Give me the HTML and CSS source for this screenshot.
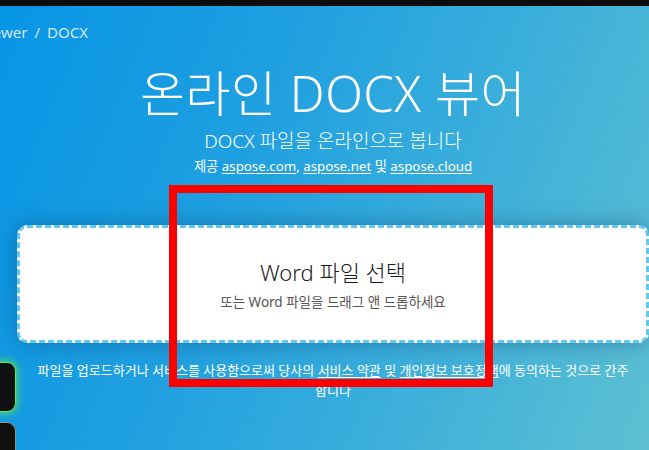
FILE: index.html
```html
<!DOCTYPE html>
<html lang="ko">
<head>
<meta charset="utf-8">
<title>온라인 DOCX 뷰어</title>
<link rel="stylesheet" href="styles.css">
</head>
<body>
<div class="topbar"></div>
<div class="hero">
  <nav class="breadcrumb">Viewer<span class="sep">/</span>DOCX</nav>
  <main class="main">
    <h1 class="title">온라인 DOCX 뷰어</h1>
    <p class="subtitle">DOCX 파일을 온라인으로 봅니다</p>
    <p class="provider">제공 <a href="#">aspose.com</a>, <a href="#">aspose.net</a> 및 <a href="#">aspose.cloud</a></p>
    <div class="dropzone">
      <div class="drop-title">Word 파일 선택</div>
      <div class="drop-sub">또는 Word 파일을 드래그 앤 드롭하세요</div>
    </div>
    <p class="terms">파일을 업로드하거나 서비스를 사용함으로써 당사의 <a href="#">서비스 약관</a> 및 <a href="#">개인정보 보호정책</a>에 동의하는 것으로 간주합니다</p>
  </main>
  <div class="side side-a"></div>
  <div class="side side-b"></div>
  <div class="highlight"></div>
</div>
</body>
</html>
```
FILE: styles.css
```css
html, body {
  margin: 0;
  padding: 0;
}
body {
  width: 649px;
  height: 450px;
  overflow: hidden;
  font-family: "Noto Sans", "Noto Sans CJK KR", sans-serif;
  background: #0b0b0b;
}
.topbar {
  height: 6px;
  background: #0c0c0c;
}
.hero {
  position: relative;
  height: 444px;
  overflow: hidden;
  background: linear-gradient(112deg, #0795e6 0%, #1e9fe0 35%, #3aaedb 65%, #5dc0d2 100%);
  color: #fff;
}
.breadcrumb {
  margin: 0 0 0 -20px;
  padding-top: 16px;
  font-size: 15px;
  line-height: 20px;
  color: rgba(255, 255, 255, 0.82);
  white-space: nowrap;
}
.breadcrumb .sep {
  margin: 0 7px;
}
.main {
  margin-left: 17px;
  width: 632px;
  display: flex;
  flex-direction: column;
  align-items: center;
}
.title {
  margin: 19px 0 0;
  font-size: 49px;
  line-height: 64px;
  font-weight: 300;
  letter-spacing: 0.5px;
  white-space: nowrap;
}
.subtitle {
  margin: 4px 0 0;
  font-size: 19px;
  line-height: 24px;
  font-weight: 300;
}
.provider {
  margin: 3px 0 0;
  font-size: 13.3px;
  line-height: 20px;
}
.provider a, .terms a {
  color: #fff;
  text-decoration: underline;
  text-underline-offset: 2px;
}
.dropzone {
  box-sizing: border-box;
  margin-top: 49px;
  width: 632px;
  height: 118px;
  background: #fff;
  border: 3px dashed #63c7f2;
  border-radius: 10px;
  box-shadow: 0 0 22px rgba(0, 40, 80, 0.35);
  display: flex;
  flex-direction: column;
  align-items: center;
  justify-content: center;
  color: #1b1b1b;
}
.drop-title {
  font-size: 22px;
  line-height: 28px;
  font-weight: 300;
}
.drop-sub {
  font-size: 13.5px;
  line-height: 18px;
  color: #555;
  margin-top: 7px;
}
.terms {
  margin: 17px 0 0;
  width: 602px;
  text-align: center;
  font-size: 13px;
  line-height: 20px;
}
.side {
  position: absolute;
  left: -42px;
  width: 56px;
  border-radius: 9px;
  background: #111;
}
.side-a {
  top: 356px;
  height: 48px;
  border: 1px solid #6fe35a;
  box-shadow: 0 0 7px 2px rgba(90, 230, 70, 0.7);
}
.side-b {
  top: 416px;
  height: 60px;
  border: 1px solid #8d9b78;
}
.highlight {
  position: absolute;
  left: 169px;
  top: 179px;
  width: 308px;
  height: 186px;
  border: 8px solid #ff0000;
}
```
